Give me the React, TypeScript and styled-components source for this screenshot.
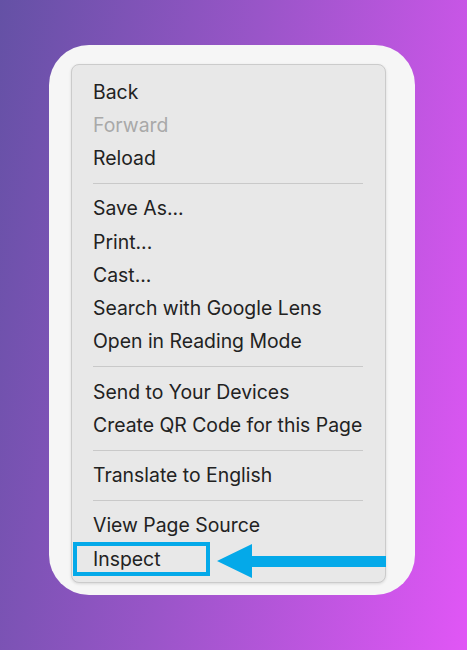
import styled, { createGlobalStyle } from "styled-components";

const GlobalStyle = createGlobalStyle`
  html, body {
    margin: 0;
    padding: 0;
  }
  body {
    font-family: Inter, "Liberation Sans", sans-serif;
  }
`;

const Page = styled.div`
  width: 467px;
  height: 650px;
  box-sizing: border-box;
  padding: 45px 52px 0 49px;
  background: linear-gradient(100deg, #6451a5 0%, #9955c8 45%, #e156f6 100%);
`;

const Card = styled.div`
  width: 366px;
  height: 550px;
  box-sizing: border-box;
  padding: 19px 29px 13px 22px;
  background: #f6f6f6;
  border-radius: 40px;
`;

const Menu = styled.ul`
  margin: 0;
  list-style: none;
  box-sizing: border-box;
  width: 315px;
  padding: 10px 0 7px;
  background: #e8e8e8;
  border: 1px solid #cbcbcb;
  border-radius: 8px;
  box-shadow: 0 1px 3px rgba(0, 0, 0, 0.12);
`;

const Item = styled.li<{ $disabled?: boolean }>`
  position: relative;
  height: 33.25px;
  display: flex;
  align-items: center;
  padding-left: 21px;
  font-size: 19.4px;
  color: ${(p) => (p.$disabled ? "#a9a9a9" : "#222222")};
`;

const Separator = styled.li`
  height: 17px;
  display: flex;
  align-items: center;
  padding: 0 22px 0 21px;
  &::after {
    content: "";
    flex: 1;
    height: 1px;
    background: #c9c9c9;
  }
`;

const Highlight = styled.span`
  position: absolute;
  left: 1px;
  top: 0;
  width: 137px;
  height: 34px;
  box-sizing: border-box;
  border: 4px solid #04a9e9;
`;

const Arrow = styled.svg`
  position: absolute;
  left: 144px;
  top: 1px;
`;

type Entry = { label: string; disabled?: boolean } | "sep";

const entries: Entry[] = [
  { label: "Back" },
  { label: "Forward", disabled: true },
  { label: "Reload" },
  "sep",
  { label: "Save As..." },
  { label: "Print..." },
  { label: "Cast..." },
  { label: "Search with Google Lens" },
  { label: "Open in Reading Mode" },
  "sep",
  { label: "Send to Your Devices" },
  { label: "Create QR Code for this Page" },
  "sep",
  { label: "Translate to English" },
  "sep",
  { label: "View Page Source" },
];

function App() {
  return (
    <Page>
      <GlobalStyle />
      <Card>
        <Menu>
          {entries.map((e, i) =>
            e === "sep" ? (
              <Separator key={i} />
            ) : (
              <Item key={i} $disabled={e.disabled}>
                {e.label}
              </Item>
            )
          )}
          <Item>
            Inspect
            <Highlight />
            <Arrow width="170" height="36" viewBox="0 0 170 36">
              <path d="M1 18 L36 1 L36 13 L170 13 L170 24 L36 24 L36 35 Z" fill="#04a9e9" />
            </Arrow>
          </Item>
        </Menu>
      </Card>
    </Page>
  );
}

export default App;
